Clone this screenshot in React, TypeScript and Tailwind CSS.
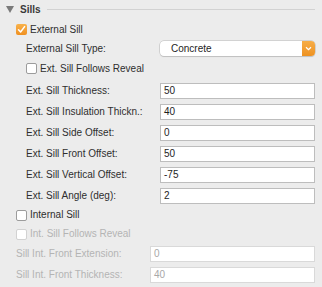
import React from "react";

const font = { fontFamily: '"Liberation Sans", Arial, sans-serif' };

function Check({ checked, disabled }: { checked?: boolean; disabled?: boolean }) {
  if (checked) {
    return (
      <div className="w-[11px] h-[11px] rounded-[2px] bg-gradient-to-b from-[#f8b24a] to-[#ef901f] flex items-center justify-center shrink-0">
        <svg width="9" height="9" viewBox="0 0 9 9">
          <path d="M1.5 4.8 L3.6 7 L7.6 1.6" fill="none" stroke="white" strokeWidth="1.5" strokeLinecap="round" strokeLinejoin="round" />
        </svg>
      </div>
    );
  }
  return (
    <div
      className={
        "w-[11px] h-[11px] rounded-[2px] bg-white border shrink-0 " +
        (disabled ? "border-[#d2d2d2] bg-[#f4f4f4]" : "border-[#9c9c9c]")
      }
    />
  );
}

function InputRow({ label, value, h = "h-[21px]" }: { label: string; value: string; h?: string }) {
  return (
    <div className={"flex items-center pl-[26px] pr-[7px] " + h}>
      <div className="w-[134px] text-[#2e2e2e] whitespace-nowrap">{label}</div>
      <div className="flex-1 h-[16px] bg-white border border-[#bdbdbd] flex items-center pl-[3px] text-[#1e1e1e]">
        {value}
      </div>
    </div>
  );
}

function DisabledRow({ label, value, h }: { label: string; value: string; h: string }) {
  return (
    <div className={"flex items-center pl-[16px] pr-[7px] " + h}>
      <div className="w-[134px] text-[#b4b4b4] whitespace-nowrap">{label}</div>
      <div className="flex-1 h-[16px] bg-white border border-[#d9d9d9] flex items-center pl-[3px] text-[#a8a8a8]">
        {value}
      </div>
    </div>
  );
}

export default function App() {
  return (
    <div className="w-[322px] h-[287px] bg-[#ececec] text-[10px] leading-none overflow-hidden" style={font}>
      {/* Header */}
      <div className="h-[19px] flex items-center pl-[6px] pr-[7px]">
        <svg width="8" height="7" viewBox="0 0 8 7" className="shrink-0">
          <path d="M0 0 H8 L4 7 Z" fill="#7a7a7a" />
        </svg>
        <span className="ml-[6px] font-bold text-[#3a3a3a]">Sills</span>
        <div className="ml-[6px] flex-1 h-px bg-[#d2d2d2]" />
      </div>

      {/* External Sill */}
      <div className="h-[21px] flex items-center pl-[16px] gap-[3px]">
        <Check checked />
        <span className="text-[#2e2e2e]">External Sill</span>
      </div>

      {/* Type */}
      <div className="h-[17px] flex items-center pl-[26px] pr-[7px]">
        <div className="w-[134px] text-[#2e2e2e]">External Sill Type:</div>
        <div className="flex-1 h-[15px] flex rounded-[4px] bg-white shadow-[0_0_0_0.5px_#b8b8b8,0_1px_1px_rgba(0,0,0,0.15)] overflow-hidden">
          <div className="flex-1 flex items-center pl-[11px] text-[#1e1e1e]">Concrete</div>
          <div className="w-[13px] bg-gradient-to-b from-[#f6ad47] to-[#ee921f] flex items-center justify-center">
            <svg width="7" height="5" viewBox="0 0 7 5">
              <path d="M1 1.2 L3.5 3.6 L6 1.2" fill="none" stroke="white" strokeWidth="1.3" />
            </svg>
          </div>
        </div>
      </div>

      {/* Follows reveal */}
      <div className="h-[23px] flex items-center pl-[26px] gap-[3px]">
        <Check />
        <span className="text-[#2e2e2e]">Ext. Sill Follows Reveal</span>
      </div>

      <InputRow label="Ext. Sill Thickness:" value="50" />
      <InputRow label="Ext. Sill Insulation Thickn.:" value="40" />
      <InputRow label="Ext. Sill Side Offset:" value="0" />
      <InputRow label="Ext. Sill Front Offset:" value="50" />
      <InputRow label="Ext. Sill Vertical Offset:" value="-75" />
      <InputRow label="Ext. Sill Angle (deg):" value="2" />

      {/* Internal Sill */}
      <div className="h-[18px] flex items-center pl-[16px] gap-[3px]">
        <Check />
        <span className="text-[#2e2e2e]">Internal Sill</span>
      </div>

      <div className="h-[20px] flex items-center pl-[16px] gap-[3px]">
        <Check disabled />
        <span className="text-[#b4b4b4]">Int. Sill Follows Reveal</span>
      </div>

      <DisabledRow label="Sill Int. Front Extension:" value="0" h="h-[20px]" />
      <DisabledRow label="Sill Int. Front Thickness:" value="40" h="h-[21px]" />
    </div>
  );
}
